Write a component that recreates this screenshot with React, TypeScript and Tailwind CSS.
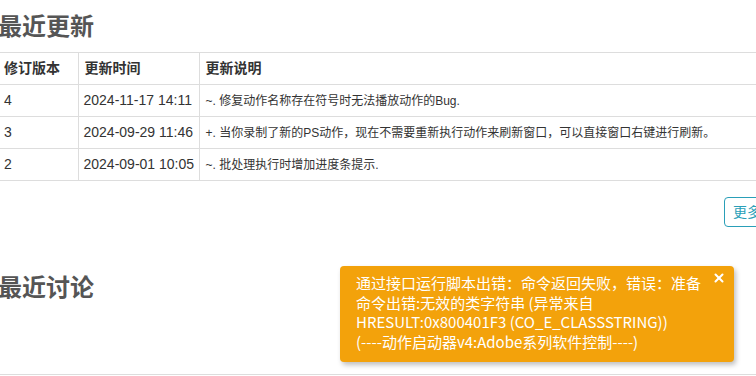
import { X } from 'lucide-react';

interface Update {
  version: string;
  time: string;
  note: string;
}

const updates: Update[] = [
  { version: '4', time: '2024-11-17 14:11', note: '~. 修复动作名称存在符号时无法播放动作的Bug.' },
  { version: '3', time: '2024-09-29 11:46', note: '+. 当你录制了新的PS动作，现在不需要重新执行动作来刷新窗口，可以直接窗口右键进行刷新。' },
  { version: '2', time: '2024-09-01 10:05', note: '~. 批处理执行时增加进度条提示.' },
];

const font = "font-['Liberation_Sans','Noto_Sans_CJK_SC',sans-serif]";

export default function App() {
  return (
    <div className={`relative w-[756px] h-[376px] overflow-hidden bg-white text-[#333] ${font}`}>
      <div className="w-[800px] -ml-[2px] pt-[12px]">
        {/* 最近更新 */}
        <h2 className="text-[24px] leading-[29px] font-bold text-[#555] mb-[11px]">最近更新</h2>
        <table className="w-full table-fixed border-collapse text-[14px]">
          <colgroup>
            <col className="w-[80px]" />
            <col className="w-[121px]" />
            <col />
          </colgroup>
          <thead>
            <tr className="h-[32px] border-y border-[#ddd]">
              <th className="px-[6px] text-left font-bold whitespace-nowrap border-r border-[#ddd]">修订版本</th>
              <th className="px-[6px] text-left font-bold whitespace-nowrap border-r border-[#ddd]">更新时间</th>
              <th className="px-[6px] text-left font-bold whitespace-nowrap">更新说明</th>
            </tr>
          </thead>
          <tbody>
            {updates.map((u) => (
              <tr key={u.version} className="h-[32px] border-b border-[#ddd]">
                <td className="px-[6px] border-r border-[#ddd]">{u.version}</td>
                <td className="px-[5px] border-r border-[#ddd] whitespace-nowrap">{u.time}</td>
                <td className="px-[6px] whitespace-nowrap text-[12px]">{u.note}</td>
              </tr>
            ))}
          </tbody>
        </table>

        <div className="flex justify-end mt-[16px]">
          <button className="h-[30px] px-[8px] border border-[#2a9fb8] rounded-[4px] text-[14px] text-[#2a9fb8] bg-white">
            更多更新
          </button>
        </div>

        {/* 最近讨论 */}
        <h2 className="mt-[46px] text-[24px] leading-[29px] font-bold text-[#555]">最近讨论</h2>
        <div className="mt-[72px] border-t border-[#ddd]" />
      </div>

      {/* 提示 */}
      <div className="absolute left-[340px] top-[266px] w-[394px] h-[96px] rounded-[4px] bg-[#f3a20b] shadow-[2px_3px_5px_rgba(0,0,0,0.25)] pl-[16px] pr-[32px] pt-[7px] text-white text-[15px] leading-[19.5px] font-['Noto_Sans_CJK_SC',sans-serif]">
        <X className="absolute right-[8px] top-[5px]" size={14} strokeWidth={3.5} />
        通过接口运行脚本出错：命令返回失败，错误：准备命令出错:无效的类字符串 (异常来自 HRESULT:0x800401F3 (CO_E_CLASSSTRING)){' '}
        <span className="whitespace-nowrap">(----动作启动器v4:Adobe系列软件控制----)</span>
      </div>
    </div>
  );
}
